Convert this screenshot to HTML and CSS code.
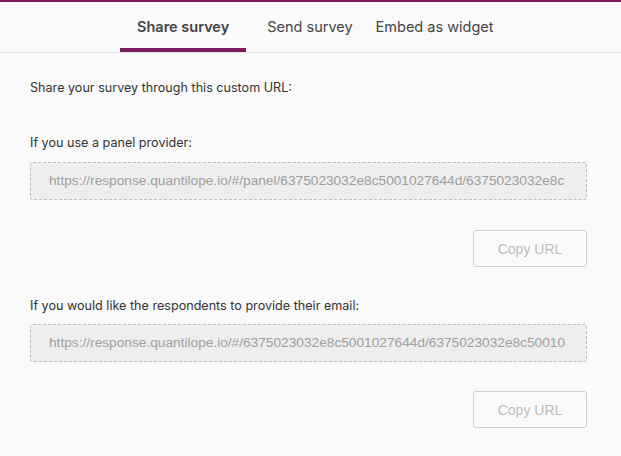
FILE: index.html
```html
<!DOCTYPE html>
<html>
<head>
<meta charset="utf-8">
<link rel="stylesheet" href="styles.css">
</head>
<body>
<div class="topline"></div>
<nav class="tabs">
  <div class="tab active">Share survey</div>
  <div class="tab send">Send survey</div>
  <div class="tab embed">Embed as widget</div>
</nav>
<main class="content">
  <p class="intro">Share your survey through this custom URL:</p>
  <section class="block">
    <p class="label">If you use a panel provider:</p>
    <div class="url"><div class="url-text">https://response.quantilope.io/#/panel/6375023032e8c5001027644d/6375023032e8c</div></div>
    <div class="actions"><button class="copy">Copy URL</button></div>
  </section>
  <section class="block second">
    <p class="label">If you would like the respondents to provide their email:</p>
    <div class="url"><div class="url-text">https://response.quantilope.io/#/6375023032e8c5001027644d/6375023032e8c50010</div></div>
    <div class="actions"><button class="copy">Copy URL</button></div>
  </section>
</main>
</body>
</html>
```
FILE: styles.css
```css
html, body {
  margin: 0;
  padding: 0;
  background: #fafafa;
  font-family: Inter, "Liberation Sans", sans-serif;
  color: #333;
}
.topline {
  height: 2px;
  background: #7d1b5f;
}
.tabs {
  display: flex;
  justify-content: flex-start;
  padding-left: 120px;
  height: 50px;
  border-bottom: 1px solid #e2e2e2;
}
.tab {
  display: flex;
  align-items: center;
  font-size: 14.5px;
  color: #444;
  box-sizing: border-box;
  height: 50px;
  padding-bottom: 2px;
}
.tab.active {
  font-weight: 600;
  padding-left: 17px;
  padding-right: 17px;
  border-bottom: 4px solid #7d1b5f;
  padding-top: 4px;
  padding-bottom: 2px;
}
.tab.send {
  margin-left: 21px;
}
.tab.embed {
  margin-left: 23px;
}
.content {
  padding: 25px 34px 0 30px;
}
.intro {
  margin: 0;
  font-size: 12.6px;
  line-height: 20px;
}
.block {
  margin-top: 35px;
}
.block.second {
  margin-top: 29px;
}
.label {
  margin: 0 0 9px;
  font-size: 12.6px;
  line-height: 20px;
}
.second .label {
  margin-bottom: 8px;
}
.second .actions {
  margin-top: 29px;
}
.url {
  box-sizing: border-box;
  height: 38px;
  border: 1px dashed #bdbdbd;
  border-radius: 3px;
  background: #eeeeee;
  padding: 0 18px;
}
.url-text {
  font-family: "Liberation Sans", Arial, sans-serif;
  font-size: 13.7px;
  line-height: 36px;
  color: #9e9e9e;
  white-space: nowrap;
  overflow: hidden;
}
.actions {
  display: flex;
  justify-content: flex-end;
  margin-top: 30px;
}
.copy {
  width: 114px;
  height: 37px;
  background: #fafafa;
  border: 1px solid #cfcfcf;
  border-radius: 3px;
  font-family: "Liberation Sans", Arial, sans-serif;
  font-size: 14px;
  color: #bdbdbd;
  padding: 0;
}
```
